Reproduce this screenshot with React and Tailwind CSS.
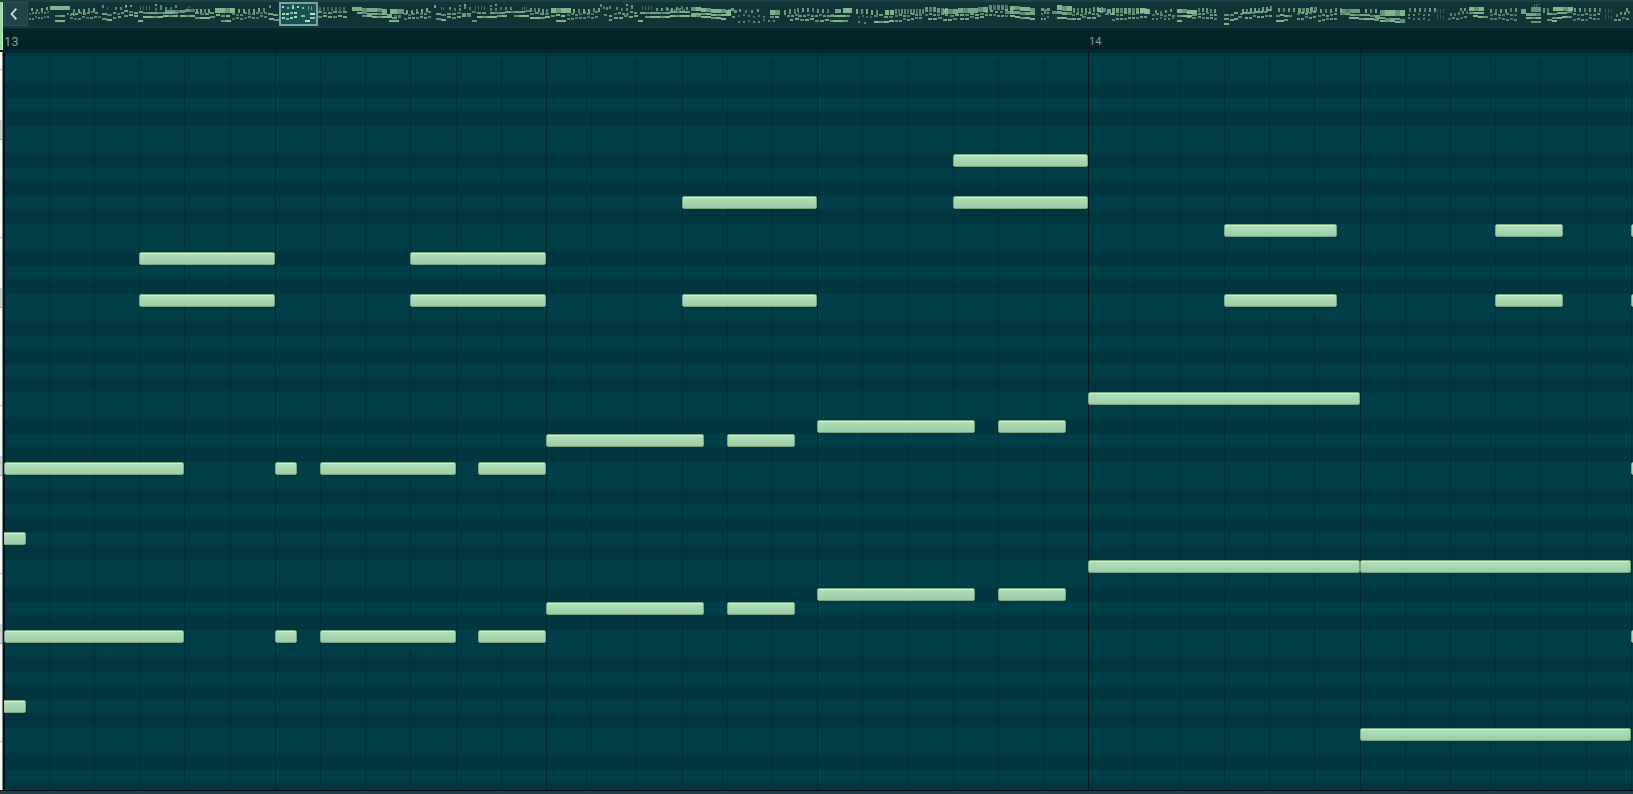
const BEAT_WIDTH = 271.22;
const CELL_WIDTH = BEAT_WIDTH / 6;
const LANE_HEIGHT = 14;
const TOP_PITCH = 102;
const LOW_PITCH = 49;
const BLACK_KEYS = [1, 3, 6, 8, 10];

// [pitch, start, end] with start and end in sixths of a beat
const NOTES = [
  [94, 21, 24],
  [91, 15, 18],
  [91, 21, 24],
  [89, 27, 29.5],
  [89, 33, 34.5],
  [89, 36, 38],
  [87, 3, 6],
  [87, 9, 12],
  [84, 3, 6],
  [84, 9, 12],
  [84, 15, 18],
  [84, 27, 29.5],
  [84, 33, 34.5],
  [84, 36, 38],
  [77, 24, 30],
  [75, 18, 21.5],
  [75, 22, 23.5],
  [74, 12, 15.5],
  [74, 16, 17.5],
  [72, 0, 4],
  [72, 6, 6.5],
  [72, 7, 10],
  [72, 10.5, 12],
  [72, 36, 38],
  [67, -0.5, 0.5],
  [65, 24, 30],
  [65, 30, 36],
  [63, 18, 21.5],
  [63, 22, 23.5],
  [62, 12, 15.5],
  [62, 16, 17.5],
  [60, 0, 4],
  [60, 6, 6.5],
  [60, 7, 10],
  [60, 10.5, 12],
  [60, 36, 38],
  [55, -0.5, 0.5],
  [53, 30, 36],
];

// Overview runs: [from, to, note width, step, y at start, y at end, height, opacity]
const RUNS = [
  [31, 51, 2, 5, 9, 7, 3, 0.8], [29, 51, 2, 3, 13, 11, 2, 0.6], [29, 50, 2, 3, 18, 16, 2, 0.6],
  [50, 70, 20, 20, 6, 6, 4, 0.9], [55, 66, 5, 5, 15, 15, 2, 0.8], [55, 65, 5, 5, 20, 20, 2, 0.9],
  [67, 80, 2, 3, 14, 14, 2, 0.6], [73, 102, 2, 5, 9, 8, 4, 0.8], [71, 102, 3, 4, 13, 12, 2, 0.7], [70, 102, 3, 4, 18, 16, 2, 0.6],
  [102, 105, 2, 3, 5, 8, 3, 0.8], [107, 112, 1, 3, 7, 7, 3, 0.4], [102, 112, 5, 5, 13, 15, 2, 0.8], [102, 112, 5, 5, 18, 20, 2, 0.9],
  [115, 134, 2, 5, 7, 6, 3, 0.6], [113, 125, 3, 4, 13, 12, 2, 0.7], [113, 125, 3, 5, 17, 17, 2, 0.8], [125, 135, 2, 5, 5, 5, 2, 0.8],
  [124, 144, 4, 5, 11, 12, 2, 0.8], [124, 140, 4, 5, 15, 15, 2, 0.9], [138, 143, 5, 5, 20, 20, 2, 0.9], [140, 153, 1, 3, 6, 6, 4, 0.4],
  [143, 180, 5, 5, 12, 12, 2, 0.8], [143, 180, 5, 5, 16, 15, 2, 0.9], [155, 165, 2, 5, 5, 5, 2, 0.8], [155, 180, 2, 5, 8, 6, 3, 0.6],
  [165, 195, 5, 5, 10, 9, 3, 0.7], [180, 195, 5, 5, 15, 15, 2, 0.9], [187, 192, 1, 2, 7, 7, 2, 0.4],
  [196, 215, 2, 4, 9, 9, 4, 0.8], [195, 215, 4, 5, 13, 13, 2, 0.7], [195, 215, 5, 5, 17, 16, 2, 0.9],
  [215, 237, 5, 5, 8, 8, 5, 0.9], [216, 232, 4, 5, 15, 15, 2, 0.9], [221, 231, 5, 5, 20, 20, 2, 0.9],
  [238, 268, 2, 5, 9, 8, 4, 0.8], [232, 268, 3, 4, 14, 12, 2, 0.6], [232, 268, 3, 4, 18, 16, 2, 0.6],
  [268, 278, 5, 5, 13, 15, 2, 0.8], [269, 279, 5, 5, 18, 20, 2, 0.9], [269, 273, 2, 3, 5, 7, 3, 0.8],
  [319, 350, 2, 4, 7, 7, 4, 0.4], [318, 352, 4, 5, 12, 11, 2, 0.7], [318, 352, 4, 5, 16, 16, 2, 0.8],
  [352, 390, 5, 5, 7, 9, 4, 0.85], [357, 395, 5, 5, 12, 14, 2, 0.85], [362, 400, 5, 5, 15, 17, 2, 0.9], [389, 399, 5, 5, 20, 20, 2, 0.9],
  [390, 404, 7, 7, 9, 9, 5, 0.9], [394, 404, 3, 4, 15, 17, 3, 0.6],
  [406, 434, 2, 5, 10, 8, 4, 0.8], [404, 434, 3, 4, 14, 12, 2, 0.6], [404, 434, 3, 4, 18, 16, 2, 0.7],
  [434, 438, 2, 3, 5, 7, 3, 0.8], [436, 446, 5, 5, 13, 15, 2, 0.8], [436, 446, 5, 5, 18, 20, 2, 0.9], [441, 446, 1, 2, 7, 7, 3, 0.4],
  [449, 475, 2, 5, 8, 7, 3, 0.6], [459, 470, 2, 5, 5, 5, 2, 0.8], [447, 490, 4, 5, 13, 12, 2, 0.7], [447, 472, 4, 5, 17, 15, 2, 0.8],
  [472, 477, 5, 5, 20, 20, 2, 0.9], [475, 487, 1, 3, 6, 6, 4, 0.4], [477, 510, 5, 5, 16, 15, 2, 0.9], [490, 500, 2, 5, 5, 5, 2, 0.8],
  [490, 515, 2, 5, 8, 7, 3, 0.6], [490, 530, 5, 5, 12, 10, 2, 0.8], [514, 530, 5, 5, 15, 15, 2, 0.9], [522, 528, 1, 2, 7, 7, 3, 0.4],
  [530, 551, 2, 4, 8, 9, 4, 0.7], [530, 550, 4, 5, 13, 13, 2, 0.7], [530, 552, 5, 5, 17, 16, 2, 0.9],
  [551, 571, 5, 5, 8, 8, 5, 0.9], [551, 567, 4, 5, 15, 15, 2, 0.9], [556, 566, 5, 5, 20, 20, 2, 0.9],
  [573, 603, 2, 5, 9, 8, 4, 0.8], [567, 600, 3, 4, 14, 12, 2, 0.6], [567, 600, 3, 4, 18, 16, 2, 0.6],
  [600, 612, 2, 3, 5, 8, 3, 0.6], [604, 614, 3, 5, 14, 18, 2, 0.8], [609, 614, 3, 4, 19, 19, 2, 0.8], [616, 640, 2, 5, 8, 7, 3, 0.6],
  [614, 640, 3, 4, 13, 12, 2, 0.7], [614, 640, 4, 5, 17, 15, 2, 0.8], [626, 636, 2, 5, 5, 4, 2, 0.8], [642, 654, 1, 3, 6, 6, 4, 0.4],
  [638, 645, 5, 5, 20, 20, 2, 0.9], [640, 690, 5, 5, 12, 11, 2, 0.8], [645, 690, 5, 5, 16, 15, 2, 0.9], [656, 691, 2, 5, 8, 7, 3, 0.7],
  [666, 686, 3, 4, 9, 9, 3, 0.5], [691, 733, 5, 5, 7, 10, 4, 0.9], [691, 733, 5, 5, 13, 14, 2, 0.9], [691, 728, 5, 5, 15, 18, 2, 0.9],
  [728, 738, 3, 3, 9, 10, 3, 0.7], [728, 738, 3, 4, 14, 18, 2, 0.7],
  [739, 768, 2, 6, 10, 10, 3, 0.7], [738, 768, 2, 5, 15, 16, 2, 0.5], [738, 780, 2, 5, 21, 20, 2, 0.6],
  [770, 780, 5, 5, 10, 10, 5, 0.9], [770, 782, 4, 5, 16, 17, 2, 0.9], [784, 800, 2, 5, 10, 8, 5, 0.7], [790, 796, 3, 4, 20, 20, 2, 0.8],
  [797, 836, 2, 5, 8, 9, 4, 0.7], [787, 835, 3, 4, 15, 15, 2, 0.7], [795, 835, 4, 5, 19, 20, 2, 0.8], [798, 801, 1, 2, 10, 10, 8, 0.6],
  [835, 842, 6, 7, 9, 9, 4, 0.8], [843, 852, 9, 9, 8, 8, 5, 0.9], [830, 852, 5, 5, 15, 15, 2, 0.9], [833, 852, 5, 5, 20, 20, 2, 0.9],
  [856, 884, 2, 5, 9, 10, 5, 0.8], [858, 876, 2, 4, 16, 16, 2, 0.4], [858, 872, 2, 6, 21, 22, 2, 0.6], [874, 894, 5, 5, 21, 20, 2, 0.9], [874, 894, 4, 5, 15, 16, 2, 0.7],
  [885, 895, 4, 5, 10, 10, 5, 0.9], [895, 925, 2, 3, 9, 9, 5, 0.6], [895, 925, 3, 4, 15, 14, 2, 0.7], [895, 925, 3, 4, 20, 17, 2, 0.7],
  [925, 950, 3, 4, 7, 8, 5, 0.7], [925, 950, 3, 4, 14, 14, 2, 0.7], [928, 960, 4, 5, 18, 19, 2, 0.8], [943, 988, 5, 5, 9, 7, 5, 0.8],
  [950, 985, 4, 5, 15, 13, 2, 0.8], [960, 985, 4, 5, 18, 16, 2, 0.8], [989, 1012, 3, 4, 5, 5, 5, 0.6], [985, 1015, 3, 5, 11, 10, 2, 0.8], [985, 1010, 3, 4, 14, 16, 2, 0.7],
  [1010, 1035, 5, 5, 6, 8, 4, 0.9], [1005, 1035, 5, 5, 11, 12, 3, 0.8], [1010, 1035, 5, 5, 15, 19, 2, 0.9],
  [1041, 1052, 3, 3, 9, 8, 3, 0.7], [1041, 1052, 2, 3, 13, 12, 2, 0.7], [1041, 1052, 2, 3, 18, 17, 2, 0.7],
  [1057, 1072, 5, 5, 5, 7, 5, 0.9], [1052, 1072, 5, 5, 11, 12, 3, 0.8], [1057, 1072, 5, 5, 17, 18, 2, 0.9],
  [1073, 1105, 2, 4, 8, 7, 5, 0.7], [1072, 1105, 3, 4, 14, 12, 2, 0.7], [1072, 1105, 4, 5, 18, 16, 2, 0.8], [1097, 1112, 4, 5, 8, 9, 4, 0.8],
  [1105, 1115, 4, 5, 13, 14, 2, 0.8], [1112, 1150, 3, 4, 8, 8, 5, 0.75], [1112, 1150, 3, 4, 14, 12, 2, 0.7], [1112, 1150, 3, 4, 19, 16, 2, 0.7], [1140, 1154, 5, 5, 8, 9, 5, 0.9],
  [1155, 1176, 2, 5, 11, 9, 3, 0.7], [1152, 1176, 3, 4, 14, 15, 2, 0.6], [1152, 1176, 2, 4, 18, 18, 2, 0.6],
  [1177, 1197, 5, 5, 9, 10, 4, 0.9], [1177, 1197, 5, 5, 15, 14, 2, 0.9], [1177, 1182, 5, 5, 20, 20, 2, 0.9], [1187, 1200, 4, 5, 17, 17, 2, 0.8],
  [1198, 1220, 2, 4, 8, 9, 4, 0.7], [1198, 1220, 3, 4, 13, 14, 2, 0.7], [1198, 1220, 3, 4, 17, 18, 2, 0.7],
  [1224, 1230, 5, 6, 14, 14, 2, 0.9], [1224, 1230, 5, 6, 18, 18, 2, 0.8], [1224, 1230, 5, 6, 23, 23, 2, 0.9],
  [1230, 1240, 4, 4, 14, 12, 2, 0.8], [1230, 1245, 4, 4, 19, 16, 2, 0.8], [1242, 1277, 2, 4, 9, 6, 5, 0.8], [1240, 1275, 3, 4, 13, 10, 2, 0.8], [1245, 1275, 3, 4, 17, 15, 2, 0.8],
  [1278, 1298, 2, 5, 8, 8, 4, 0.7], [1276, 1295, 4, 4, 15, 15, 2, 0.8], [1276, 1290, 4, 4, 20, 20, 2, 0.9], [1298, 1320, 3, 4, 8, 7, 5, 0.75],
  [1297, 1320, 3, 4, 13, 12, 2, 0.7], [1297, 1317, 3, 4, 18, 16, 2, 0.7], [1320, 1348, 2, 5, 9, 8, 4, 0.7], [1318, 1340, 3, 4, 15, 14, 2, 0.7], [1318, 1340, 3, 4, 20, 17, 2, 0.7],
  [1340, 1364, 5, 5, 9, 9, 4, 0.7], [1340, 1380, 5, 5, 13, 15, 2, 0.8], [1349, 1380, 5, 5, 17, 19, 2, 0.9],
  [1365, 1380, 2, 5, 9, 9, 4, 0.8], [1380, 1406, 5, 5, 10, 10, 6, 0.9], [1375, 1406, 5, 5, 17, 19, 2, 0.8], [1380, 1406, 5, 5, 20, 21, 2, 0.9],
  [1409, 1440, 2, 5, 8, 8, 4, 0.7], [1408, 1436, 2, 5, 14, 14, 2, 0.6], [1408, 1436, 2, 5, 18, 19, 2, 0.6], [1437, 1447, 1, 3, 9, 9, 4, 0.3], [1437, 1447, 1, 3, 15, 16, 4, 0.3],
  [1450, 1470, 2, 4, 14, 10, 3, 0.6], [1448, 1468, 3, 4, 18, 17, 2, 0.6], [1460, 1470, 2, 4, 8, 7, 3, 0.7],
  [1469, 1488, 5, 5, 7, 7, 4, 0.9], [1469, 1488, 5, 5, 12, 12, 2, 0.9], [1473, 1488, 5, 5, 15, 17, 2, 0.9],
  [1490, 1522, 2, 5, 9, 8, 4, 0.7], [1490, 1520, 3, 4, 14, 14, 2, 0.6], [1490, 1520, 3, 4, 18, 19, 2, 0.6],
  [1521, 1526, 5, 5, 9, 9, 5, 0.8], [1531, 1541, 10, 10, 7, 7, 5, 0.9], [1526, 1541, 5, 5, 13, 13, 3, 0.8], [1526, 1541, 5, 5, 17, 17, 2, 0.9], [1531, 1541, 10, 10, 21, 21, 2, 0.9], [1534, 1541, 1, 2, 4, 4, 3, 0.4],
  [1543, 1552, 2, 4, 8, 8, 5, 0.7], [1547, 1557, 5, 5, 19, 20, 2, 0.9], [1553, 1573, 5, 5, 7, 7, 4, 0.9], [1547, 1573, 5, 5, 13, 11, 2, 0.8], [1552, 1573, 5, 5, 17, 15, 2, 0.9],
  [1574, 1604, 2, 5, 8, 8, 4, 0.7], [1573, 1604, 3, 4, 14, 14, 2, 0.6], [1573, 1604, 3, 4, 19, 18, 2, 0.6], [1605, 1614, 1, 3, 9, 9, 4, 0.3], [1605, 1614, 1, 3, 15, 16, 4, 0.3],
  [1616, 1633, 2, 4, 14, 10, 3, 0.7], [1614, 1633, 3, 4, 19, 17, 2, 0.7], [1626, 1633, 2, 4, 8, 7, 4, 0.7],
];

// Notes under the overview's view frame
const FRAMED_RUNS = [
  [282, 308, 2, 5, 7, 7, 2, 0.9],
  [292, 301, 2, 5, 5, 5, 2, 1],
  [282, 301, 3, 4, 13, 12, 2, 0.9],
  [282, 301, 3, 4, 18, 16, 2, 0.9],
  [301, 305, 4, 5, 15, 15, 2, 0.9],
  [305, 310, 5, 5, 20, 20, 2, 1],
  [310, 315, 5, 5, 13, 13, 2, 1],
  [310, 315, 5, 5, 17, 17, 2, 1],
  [308, 315, 1, 3, 6, 6, 4, 0.5],
];

const cellX = (cell) => Math.floor(cell * CELL_WIDTH);
const isBlack = (pitch) => BLACK_KEYS.includes(pitch % 12);

const PITCHES = Array.from({ length: TOP_PITCH - LOW_PITCH + 1 }, (_, i) => TOP_PITCH - i);
const CELLS = Array.from({ length: 37 }, (_, i) => i);

function Runs({ runs, fill }) {
  return runs.map(([from, to, width, step, y0, y1, height, opacity], r) => {
    const count = Math.max(1, Math.floor((to - from) / step));
    return (
      <g key={r} fill={fill} opacity={opacity}>
        {Array.from({ length: count }, (_, i) => (
          <rect
            key={i}
            x={from + i * step}
            y={Math.round(y0 + ((y1 - y0) * i) / count) + (height < 4 && width < 5 && (i * 5 + r) % 3 === 0 ? -1 : 0)}
            width={width}
            height={height}
            opacity={(i + r) % 3 === 1 ? 0.75 : 1}
          />
        ))}
      </g>
    );
  });
}

function Overview() {
  return (
    <div className="flex h-7 border-b border-[#1b3c3f] border-t-2 border-t-[#1d4144] bg-[#103437] pl-1">
      <button
        type="button"
        aria-label="Scroll left"
        className="flex h-6 w-6 shrink-0 items-center justify-center border border-[#2d5053] bg-[#1f4548]"
      >
        <svg viewBox="0 0 24 24" className="h-6 w-6 shrink-0" fill="none" stroke="#d3e0e1" strokeWidth="1.8">
          <path d="M12.4 6.6 7.6 12l4.8 5.4" />
        </svg>
      </button>
      <svg
        viewBox="28 2 1605 24"
        preserveAspectRatio="none"
        shapeRendering="crispEdges"
        className="h-6 min-w-0 flex-1"
        role="img"
        aria-label="Song overview"
      >
        <Runs runs={RUNS} fill="#8fc397" />
        <rect x="280" y="3" width="37" height="22" fill="#1a5054" stroke="#76a5aa" strokeWidth="2" shapeRendering="auto" />
        <Runs runs={FRAMED_RUNS} fill="#a8f5c8" />
      </svg>
    </div>
  );
}

function Ruler() {
  return (
    <div className="relative h-6 border-b border-[#001a1f] bg-linear-to-b from-[#04272c] to-[#001f24] font-[Roboto,sans-serif] text-[#7f9a9b]">
      <span className="absolute left-0 top-1 text-[13px] leading-5">13</span>
      <span className="absolute top-1 text-[11px] leading-5" style={{ left: cellX(24) + 1 }}>
        14
      </span>
      <div className="absolute inset-x-0 bottom-0 h-px bg-[#0f3034]" />
    </div>
  );
}

function Keys() {
  return (
    <div className="w-[3px] shrink-0 overflow-hidden border-r border-[#7d8789] bg-[#f4f6fb]">
      <div className="h-[18px] border-b border-[#b9c0c4]" />
      {[0, 1, 2, 3, 4].map((octave) => (
        <div key={octave}>
          <div className="h-[50px]" />
          <div className="h-5 border-b border-[#9da5a9] bg-[#cdd1d5]" />
          <div className="h-[98px] border-b border-[#b9c0c4]" />
        </div>
      ))}
    </div>
  );
}

function Lanes() {
  return PITCHES.map((pitch) => (
    <div
      key={pitch}
      className={`h-[14px] border-b ${
        isBlack(pitch) ? "border-[#003740] bg-[#003640]" : "border-[#00363f] bg-[#003f48]"
      }`}
    />
  ));
}

function lineColor(cell) {
  if (cell % 24 === 0) return "bg-[#00151c]";
  if (cell % 6 === 0) return "bg-[#002830]";
  return "bg-[#002b34]/70";
}

function PianoRoll() {
  return (
    <div className="relative min-w-0 flex-1 overflow-hidden bg-[#003640]">
      <div className="-mt-[10px]">
        <div className="relative">
          <Lanes />
          {CELLS.map((cell) => (
            <div
              key={cell}
              className={`absolute inset-y-0 w-px ${lineColor(cell)}`}
              style={{ left: cellX(cell) }}
            />
          ))}
          {NOTES.map(([pitch, start, end]) => (
            <div
              key={`${pitch}-${start}`}
              className="absolute h-[13px] rounded-[2px] border border-[#7da583] bg-linear-to-b from-[#afe2bb] to-[#9dcca6] shadow-[inset_0_1px_0_#c5f6c8]"
              style={{
                top: (TOP_PITCH - pitch) * LANE_HEIGHT,
                left: cellX(start),
                width: cellX(end) - cellX(start),
              }}
            />
          ))}
        </div>
      </div>
    </div>
  );
}

export default function App() {
  return (
    <main className="flex h-screen flex-col overflow-hidden bg-[#1c4145]">
      <header className="relative shrink-0">
        <Overview />
        <div className="bg-[#001f24] pl-1">
          <Ruler />
        </div>
        <div className="absolute bottom-[2px] left-0 top-[2px] w-[3px] border-r border-[#b9f3bd] bg-[#9fd6a4]" />
      </header>
      <section className="flex min-h-0 flex-1 border-b border-[#001014]">
        <Keys />
        <div className="w-px shrink-0 bg-[#001319]" />
        <PianoRoll />
      </section>
      <footer className="h-[3px] shrink-0 bg-[#1c4145]" />
    </main>
  );
}
